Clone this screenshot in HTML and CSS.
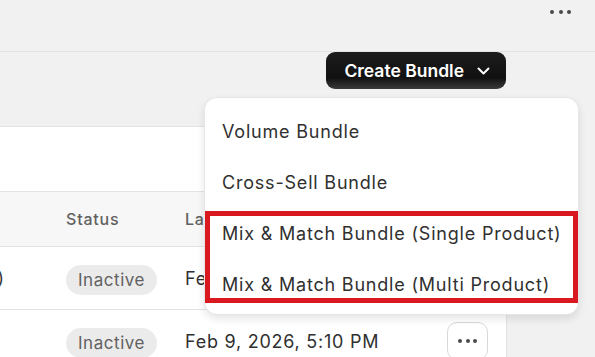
FILE: index.html
```html
<!DOCTYPE html>
<html>
<head>
  <meta charset="UTF-8">
  <title>Bundles</title>
  <link rel="stylesheet" href="styles.css">
</head>
<body>
  <div class="topbar">
    <div class="more">
      <span></span><span></span><span></span>
    </div>
  </div>

  <div class="page">
    <div class="actions">
      <button class="primary">
        Create Bundle
        <svg width="13" height="8" viewBox="0 0 13 8"><path d="M1.5 1.5 L6.5 6.5 L11.5 1.5" fill="none" stroke="#fff" stroke-width="2" stroke-linecap="round" stroke-linejoin="round"/></svg>
      </button>
    </div>

    <div class="card">
      <div class="card-top"></div>
      <div class="row head">
        <div class="cell name"></div>
        <div class="cell">Status</div>
        <div class="cell">Last updated</div>
        <div class="cell"></div>
      </div>
      <div class="row">
        <div class="cell name"><span>Mix &amp; Match Bundle (Single Product)</span></div>
        <div class="cell"><span class="badge">Inactive</span></div>
        <div class="cell date">Feb 9, 2026, 5:14 PM</div>
        <div class="cell"><button class="dots"><span></span><span></span><span></span></button></div>
      </div>
      <div class="row">
        <div class="cell name"></div>
        <div class="cell"><span class="badge">Inactive</span></div>
        <div class="cell date">Feb 9, 2026, 5:10 PM</div>
        <div class="cell"><button class="dots"><span></span><span></span><span></span></button></div>
      </div>
    </div>

    <div class="menu">
      <div class="menu-item">Volume Bundle</div>
      <div class="menu-item">Cross-Sell Bundle</div>
      <div class="menu-item">Mix &amp; Match Bundle (Single Product)</div>
      <div class="menu-item">Mix &amp; Match Bundle (Multi Product)</div>
      <div class="highlight"></div>
    </div>
  </div>
</body>
</html>
```

FILE: styles.css
```css
body {
  margin: 0;
  background-color: #f1f1f1;
  font-family: Inter, "Noto Sans", sans-serif;
  color: #303030;
  overflow: hidden;
}
.topbar {
  height: 51px;
  border-bottom: 1px solid #e4e4e4;
  display: flex;
  justify-content: flex-end;
  padding-right: 24px;
}
.more {
  display: flex;
  gap: 4.5px;
  margin-top: 10px;
}
.more span {
  width: 4px;
  height: 4px;
  border-radius: 50%;
  background-color: #4a4a4a;
}
.page {
  position: relative;
  width: 506px;
}
.actions {
  display: flex;
  justify-content: flex-end;
  margin-bottom: 38px;
}
.primary {
  height: 37px;
  display: flex;
  align-items: center;
  gap: 13px;
  padding: 0 16px 0 18px;
  border: none;
  border-radius: 9px;
  background: linear-gradient(#1c1c1c, #111 70%, #3a3a3a);
  color: #fff;
  font-family: inherit;
  font-size: 17.5px;
  font-weight: 600;
}
.card {
  background-color: #fff;
  border-radius: 0 12px 0 0;
  box-shadow: 0 0 0 1px #e3e3e3;
}
.card-top {
  height: 64px;
  border-bottom: 1px solid #e3e3e3;
}
.row {
  display: grid;
  grid-template-columns: 66px 119px 262px 1fr;
  height: 62px;
  border-bottom: 1px solid #e3e3e3;
  font-size: 17px;
  color: #303030;
}
.row.head {
  height: 54px;
  background-color: #f7f7f7;
  color: #616161;
  font-size: 16px;
  font-weight: 500;
  letter-spacing: 0.8px;
}
.cell {
  display: flex;
  align-items: center;
  white-space: nowrap;
  min-width: 0;
}
.cell.name {
  justify-content: flex-end;
  padding-right: 62px;
}
.cell.date {
  font-size: 18px;
  letter-spacing: 0.75px;
}
.badge {
  display: inline-block;
  padding: 5px 12px;
  margin-top: 4px;
  border-radius: 15px;
  background-color: #ebebeb;
  color: #616161;
  font-size: 17px;
  letter-spacing: 0.55px;
}
.dots {
  width: 41px;
  height: 38px;
  display: flex;
  align-items: center;
  justify-content: center;
  gap: 3.5px;
  border: 1px solid #d8d8d8;
  border-radius: 10px;
  background-color: #fff;
}
.dots span {
  width: 4px;
  height: 4px;
  border-radius: 50%;
  background-color: #4a4a4a;
}
.menu {
  position: absolute;
  left: 205px;
  top: 46px;
  width: 373px;
  padding: 8px 0 4px;
  background-color: #fff;
  border-radius: 12px;
  box-shadow: 0 0 0 1px #e6e6e6, 0 4px 10px rgba(0, 0, 0, 0.12);
}
.menu-item {
  height: 51px;
  display: flex;
  align-items: center;
  padding-left: 17px;
  font-size: 18px;
  letter-spacing: 0.8px;
  color: #303030;
}
.highlight {
  position: absolute;
  left: 0;
  top: 113px;
  width: 373px;
  height: 92px;
  box-sizing: border-box;
  border: 5.5px solid #d9181f;
}
```
